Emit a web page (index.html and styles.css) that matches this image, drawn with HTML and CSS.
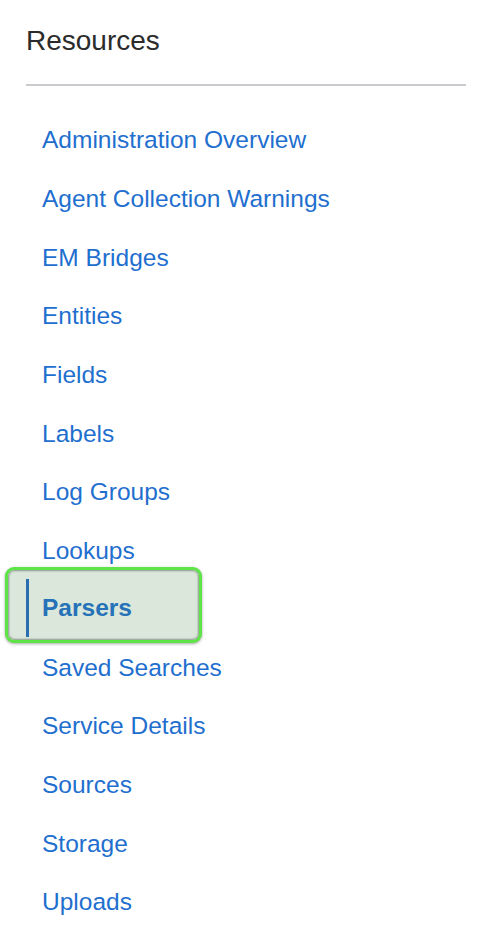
FILE: index.html
```html
<!DOCTYPE html>
<html lang="en">
<head>
  <meta charset="UTF-8" />
  <meta name="viewport" content="width=device-width, initial-scale=1.0"/>
  <title>Resources</title>
  <link rel="stylesheet" href="styles.css">
</head>
<body>

  <nav class="resources">
    <h2>Resources</h2>
    <ul class="nav-list">
      <li><a href="#">Administration Overview</a></li>
      <li><a href="#">Agent Collection Warnings</a></li>
      <li><a href="#">EM Bridges</a></li>
      <li><a href="#">Entities</a></li>
      <li><a href="#">Fields</a></li>
      <li><a href="#">Labels</a></li>
      <li><a href="#">Log Groups</a></li>
      <li><a href="#">Lookups</a></li>
      <li class="active"><a href="#"><span class="bar"></span>Parsers</a></li>
      <li><a href="#">Saved Searches</a></li>
      <li><a href="#">Service Details</a></li>
      <li><a href="#">Sources</a></li>
      <li><a href="#">Storage</a></li>
      <li><a href="#">Uploads</a></li>
    </ul>
  </nav>

</body>
</html>
```

FILE: styles.css
```css
body {
  margin: 0;
  background: #fff;
  font-family: 'Liberation Sans', Arial, sans-serif;
}

.resources {
  width: 440px;
  padding-left: 26px;
}

h2 {
  margin: 0;
  padding-top: 25px;
  padding-bottom: 27px;
  font-size: 28px;
  font-weight: normal;
  line-height: 32px;
  color: #2b2b2b;
  border-bottom: 2px solid #cacbce;
}

.nav-list {
  list-style: none;
  margin: 0;
  padding: 25px 0 0;
}

.nav-list li {
  height: 58.7px;
  display: flex;
  align-items: center;
}

.nav-list a {
  padding-left: 16px;
  font-size: 24.5px;
  color: #1f6fcf;
  text-decoration: none;
}

.nav-list li.active {
  box-sizing: border-box;
  height: 76px;
  width: 197px;
  margin: -13.65px 0 -4.65px -21px;
  padding-top: 6px;
  border: 3px solid #5de447;
  border-radius: 9px;
  background: #dbe7db;
  box-shadow: inset 0 0 2px 1px #8e958e, 0 1px 3px rgba(0, 0, 0, 0.35);
}

.nav-list li.active a {
  display: flex;
  align-items: center;
  padding-left: 18px;
  font-weight: bold;
  color: #2672b8;
}

.bar {
  width: 3px;
  height: 58px;
  margin-right: 13px;
  background: #2a6db0;
}
```
